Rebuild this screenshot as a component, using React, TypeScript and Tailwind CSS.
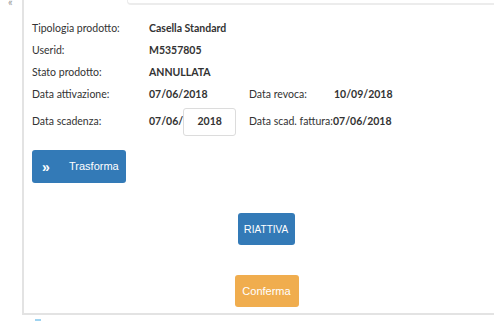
import React from 'react';

const rows = [
  { label: 'Tipologia prodotto:', value: 'Casella Standard' },
  { label: 'Userid:', value: 'M5357805' },
  { label: 'Stato prodotto:', value: 'ANNULLATA' },
];

const App = () => {
  return (
    <div className="flex h-[321px] w-[494px] overflow-hidden bg-white font-['Lato','Liberation_Sans',sans-serif] text-[10.5px] text-[#333]">
      {/* collapse toggle */}
      <div className="w-[22px] shrink-0 pl-[8px] text-[11px] leading-[4px] text-[#999]">«</div>

      <div className="flex w-[472px] shrink-0 flex-col">
        <div className="flex h-[315px] flex-col border-b-2 border-l-2 border-[#e3e3e3]">
          {/* bottom of the panel above */}
          <div className="ml-[103px] h-[5px] rounded-bl-[4px] border-b-2 border-l border-[#ececec]" />

          <div className="ml-[8px] mt-[13px] flex flex-col whitespace-nowrap">
            {rows.map((row) => (
              <div key={row.label} className="grid h-[22px] grid-cols-[117px_auto] items-center">
                <span>{row.label}</span>
                <span className="font-bold">{row.value}</span>
              </div>
            ))}

            <div className="grid h-[22px] grid-cols-[117px_100px_85px_auto] items-center">
              <span>Data attivazione:</span>
              <span className="font-bold">07/06/2018</span>
              <span>Data revoca:</span>
              <span className="font-bold">10/09/2018</span>
            </div>

            <div className="mt-[1px] grid h-[30px] grid-cols-[117px_100px_84px_auto] items-center">
              <span>Data scadenza:</span>
              <span className="flex items-center font-bold">
                07/06/
                <span className="flex h-[28px] w-[53px] items-center justify-center rounded-[3px] border border-[#dcdcdc]">
                  2018
                </span>
              </span>
              <span>Data scad. fattura:</span>
              <span className="font-bold">07/06/2018</span>
            </div>

            <button className="mt-[13px] flex h-[33px] w-[94px] items-center rounded-[3px] bg-[#337ab7] pl-[10px] font-['Liberation_Sans',Arial,sans-serif] text-[11px] text-white">
              <span className="w-[27px] text-left text-[14px] font-bold leading-none">»</span>
              <span>Trasforma</span>
            </button>
          </div>

          <div className="mt-[30px] flex justify-center pl-[14px]">
            <button className="h-[32px] w-[57px] rounded-[3px] bg-[#337ab7] font-['Liberation_Sans',Arial,sans-serif] text-[10px] text-white">
              <span className="text-[11px]">R</span>IATTIVA
            </button>
          </div>

          <div className="mt-[30px] flex justify-center pl-[15px]">
            <button className="h-[32px] w-[64px] rounded-[3px] bg-[#f0ad4e] font-['Liberation_Sans',Arial,sans-serif] text-[11px] text-white">
              Conferma
            </button>
          </div>
        </div>

        <div className="ml-[13px] mt-[4px] h-[2px] w-[6px] bg-[#9fd3f0]" />
      </div>
    </div>
  );
};

export default App;
